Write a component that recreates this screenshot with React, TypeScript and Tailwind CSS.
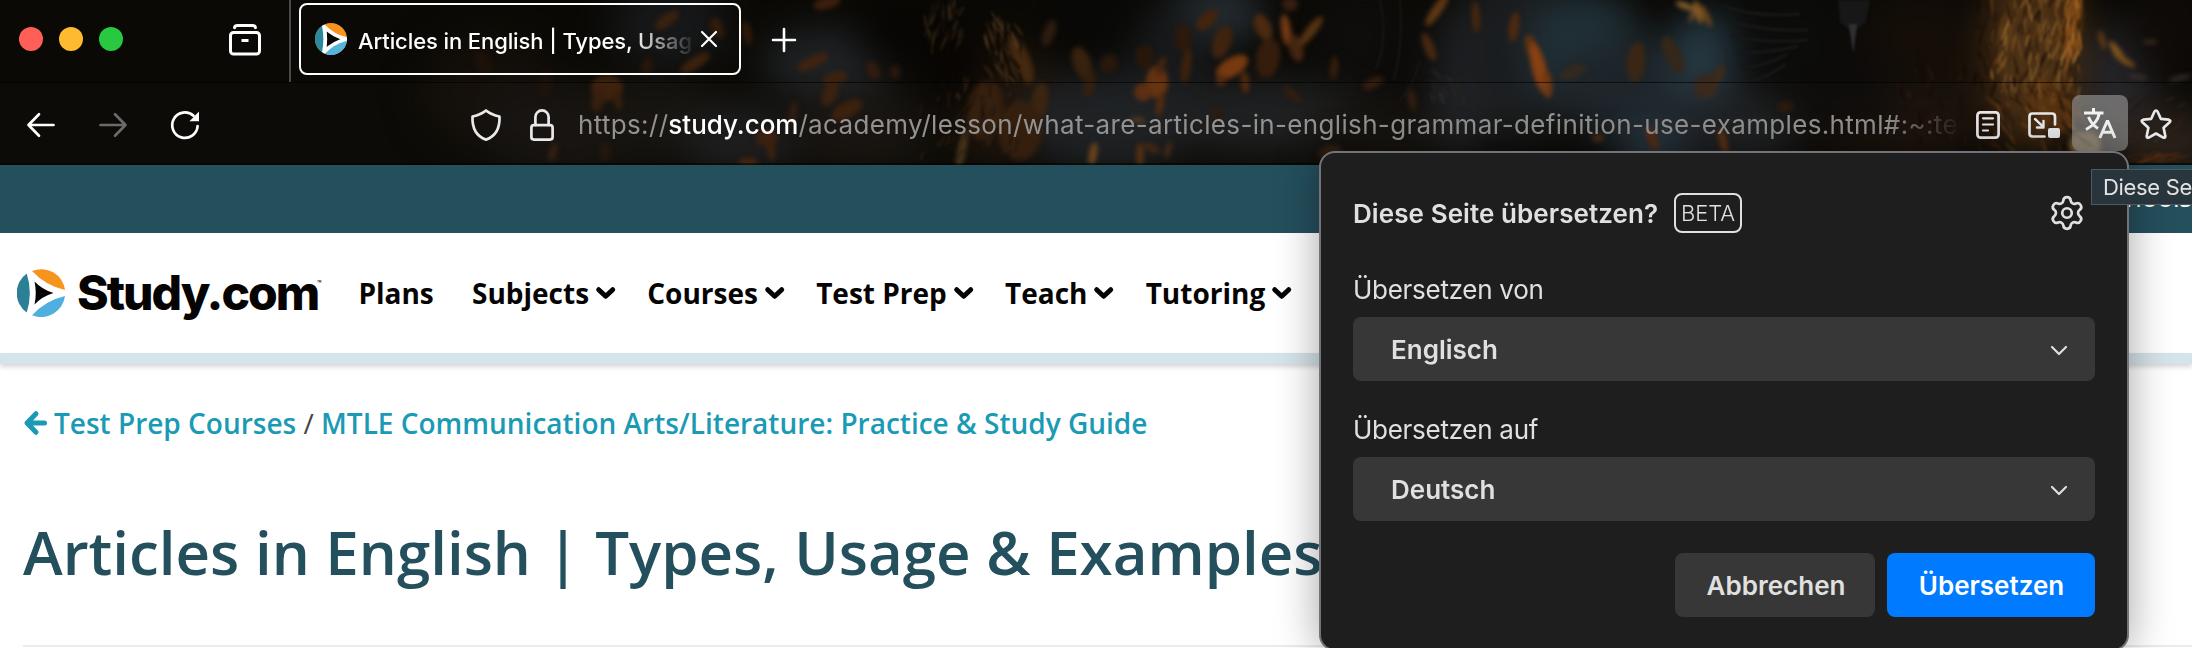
import type { ReactNode } from "react";
import { Settings } from "lucide-react";

/* ---------- toolbar theme artwork ---------- */

type Blob = [number, number, number, number, number, string, number?];

const glows: Blob[] = [
  [490, 90, 70, 60, 0, "#130e08"],
  [560, 130, 80, 50, 0, "#151210"],
  [670, 25, 60, 40, 0, "#17181a"],
  [640, 120, 90, 40, 0, "#16130f"],
  [740, 140, 60, 35, 0, "#1c1c1d"],
  [830, 62, 70, 34, 0, "#1f2225"],
  [860, 130, 70, 40, 0, "#17130f"],
  [1000, 100, 60, 60, 0, "#1d130a"],
  [1110, 120, 90, 50, 0, "#1d2023"],
  [1215, 14, 50, 30, 0, "#252d33"],
  [1170, 50, 40, 40, 0, "#17191b"],
  [1260, 115, 110, 38, 0, "#1d1e1f"],
  [1400, 130, 90, 30, 0, "#16130f"],
  [1460, 80, 26, 80, 0, "#202226"],
  [1520, 50, 60, 90, 0, "#1a1c1e"],
  [1585, 50, 60, 60, 0, "#203037"],
  [1640, 90, 90, 50, 0, "#1d2429"],
  [1705, 55, 38, 44, 0, "#263842"],
  [1655, 150, 40, 26, 0, "#263440"],
  [1740, 130, 60, 40, 0, "#1d1f21"],
  [1920, 80, 70, 90, 0, "#150e08"],
  [1900, 130, 90, 30, 0, "#1c120b"],
  [2034, 50, 48, 100, 0, "#4a2f14"],
  [2120, 80, 34, 60, 0, "#25252a"],
  [2160, 140, 60, 30, 0, "#2a211a"],
  [2165, 30, 40, 50, 0, "#0f0b08"],
];

const shadows: Blob[] = [
  [1090, 20, 40, 30, 0, "#080807"],
  [960, 70, 26, 50, 10, "#080503"],
  [1370, 40, 44, 50, 0, "#0e0d0c"],
  [1410, 70, 26, 44, 0, "#0c0a09"],
  [1330, 30, 20, 40, 0, "#0e0d0c"],
  [1790, 40, 60, 54, 0, "#0c0c0b"],
  [1850, 90, 50, 40, 0, "#0d0b0a"],
  [900, 30, 44, 40, 0, "#080604"],
];

const leaves: Blob[] = [
  [607, 88, 16, 13, 0, "#3b200c"],
  [598, 100, 6, 12, 12, "#361d0b"],
  [618, 100, 4, 10, -8, "#361d0b"],
  [695, 63, 17, 6, -32, "#3b210d"],
  [667, 20, 14, 6, -35, "#3a210e"],
  [717, 28, 6, 11, -20, "#321c0b"],
  [747, 33, 5, 12, -10, "#2d180a"],
  [647, 66, 6, 9, 15, "#27160a"],
  [483, 63, 8, 13, -20, "#1c120a"],
  [545, 85, 7, 14, 10, "#1a110a"],
  [813, 62, 17, 6, -25, "#3f2310"],
  [835, 78, 13, 6, -15, "#3d220f"],
  [830, 94, 7, 13, 25, "#3a200d"],
  [847, 110, 17, 8, -28, "#3a1f0c"],
  [873, 70, 6, 10, -25, "#321c0e"],
  [793, 113, 4, 12, 8, "#2e1c0f"],
  [767, 138, 11, 9, 0, "#3a1f0c"],
  [771, 151, 4, 10, -8, "#3a1f0c"],
  [748, 163, 10, 5, 0, "#43230c"],
  [553, 152, 4, 10, 15, "#321d0f"],
  [605, 152, 6, 9, 0, "#21150c"],
  [827, 3, 14, 6, -15, "#3c1f0c"],
  [895, 72, 5, 7, 0, "#2a180d"],
  [1049, 33, 6, 14, 20, "#2c1c0f"],
  [1082, 63, 9, 17, -20, "#38210e"],
  [1089, 84, 6, 14, 10, "#321e0e"],
  [1109, 64, 9, 10, 30, "#28180c"],
  [1145, 57, 10, 12, 0, "#27170b"],
  [1157, 82, 11, 16, 0, "#66320f"],
  [1143, 92, 9, 9, 30, "#5b2e0f"],
  [1160, 104, 4, 12, 10, "#50290e"],
  [1161, 66, 4, 10, 20, "#44240e"],
  [1186, 66, 5, 18, 8, "#3d210d"],
  [1183, 38, 9, 14, 0, "#2b190c"],
  [1207, 20, 13, 7, -42, "#45240e"],
  [1222, 42, 9, 17, 20, "#40230f"],
  [1232, 67, 18, 9, -32, "#773a10"],
  [1245, 82, 4, 11, -5, "#532a0e"],
  [1221, 80, 5, 6, 0, "#532a0e"],
  [1263, 27, 8, 14, -25, "#4b2a10"],
  [1268, 58, 12, 20, 10, "#351d0d"],
  [1286, 30, 5, 16, -8, "#723814"],
  [1296, 48, 7, 14, -15, "#442510"],
  [1311, 31, 5, 18, 38, "#563313"],
  [1290, 4, 8, 7, 0, "#351e0f"],
  [1334, 68, 4, 12, 5, "#351e0d"],
  [1373, 83, 11, 5, -25, "#351d0e"],
  [1292, 94, 12, 4, 40, "#321b0d"],
  [1437, 10, 5, 19, 35, "#5f3714"],
  [1429, 47, 5, 15, -22, "#482810"],
  [1412, 100, 4, 12, -10, "#2f1c0f"],
  [1476, 17, 4, 16, -3, "#47260f"],
  [1514, 27, 5, 15, 8, "#4f290f"],
  [1533, 50, 6, 16, -20, "#65330f"],
  [1539, 68, 7, 26, -14, "#884012"],
  [1547, 84, 5, 14, -5, "#713710"],
  [1330, 152, 12, 7, -15, "#2e1c0e"],
  [1093, 154, 4, 12, 10, "#6b431a"],
  [1140, 155, 4, 12, 0, "#532d0f"],
  [1152, 148, 9, 4, 25, "#402410"],
  [1168, 150, 3, 9, 15, "#402813"],
  [1138, 120, 8, 3, 10, "#4f3620"],
  [1217, 115, 5, 10, 0, "#29190f"],
  [1040, 100, 8, 18, 8, "#3a230e"],
  [1021, 60, 9, 26, -22, "#44280f"],
  [1020, 130, 22, 30, 0, "#321d0c"],
  [985, 110, 18, 30, 10, "#331d0c"],
  [962, 150, 4, 20, 12, "#4a361e"],
  [1573, 72, 14, 6, -25, "#35291e"],
  [1636, 62, 9, 20, 5, "#3b2615"],
  [1673, 55, 8, 20, -25, "#352719"],
  [1706, 86, 12, 12, 0, "#38281b"],
  [1719, 74, 5, 10, 20, "#3f2a1a"],
  [1598, 138, 6, 4, 0, "#482b16"],
  [1652, 138, 5, 13, -20, "#532a11"],
  [1723, 141, 4, 13, -15, "#5b2e11"],
  [1785, 107, 9, 5, -10, "#2b180c"],
  [1595, 158, 8, 3, -10, "#47250f"],
  [1685, 6, 10, 3, 20, "#8a642b"],
  [1698, 12, 3.5, 12, -15, "#855a22"],
  [1706, 16, 3, 12, -25, "#6f4719"],
  [1692, 16, 2, 7, 20, "#6f4f2a"],
  [2030, 50, 34, 44, 0, "#4c3116"],
  [2072, 24, 9, 36, 5, "#774415"],
  [2050, 105, 20, 30, -35, "#53300f"],
  [2085, 145, 16, 14, 0, "#70572f"],
  [2118, 53, 3.5, 14, -35, "#8a5a20"],
  [2124, 60, 3, 13, -58, "#774d1b"],
  [2102, 40, 3, 10, -15, "#5d3a16"],
  [2150, 42, 8, 2, 0, "#3c2c1f"],
  [2138, 77, 10, 2, 10, "#3c3430"],
  [2180, 78, 12, 2, -12, "#3c3430"],
];

/* Small repeatable generator, so the bark keeps the same grain on every render. */
function grain(count: number, seed: number, x: number, y: number, w: number, h: number, tilt: number, colors: string[]): Blob[] {
  let s = seed * 7919;
  const next = () => {
    s = (s * 16807) % 2147483647;
    return s / 2147483647;
  };
  next();
  return Array.from({ length: count }, () => [
    x + next() * w,
    y + next() * h,
    0.7 + next() * 1.3,
    3 + next() * 9,
    tilt + (next() - 0.5) * 44,
    colors[Math.floor(next() * colors.length)],
    0.2 + next() * 0.5,
  ] as Blob);
}

const bark: Blob[] = [
  ...grain(230, 71, 1992, -5, 88, 100, 8, ["#80531f", "#6a4119", "#8f642a", "#1c1008", "#1c1008", "#4a2c10", "#2a190b"]),
  ...grain(36, 5, 2062, -8, 20, 70, 8, ["#a05c1c", "#8f501a", "#ab7732"]),
  ...grain(110, 33, 1985, 85, 100, 66, -35, ["#5b3512", "#6f4519", "#1b0f07", "#27150a", "#3d230d"]),
  ...grain(40, 53, 1975, 0, 22, 150, 5, ["#120b06", "#2b190b", "#1c1008"]),
  ...grain(90, 91, 985, 20, 36, 62, -20, ["#5c4427", "#46301a", "#33210f", "#120b06", "#0d0804"]),
  ...grain(50, 19, 925, 0, 40, 50, 10, ["#3a2a18", "#24170c", "#4a361f", "#0d0804"]),
  ...grain(70, 47, 920, 80, 100, 84, 18, ["#2d1c0e", "#150d07", "#38230f"]),
  ...grain(24, 29, 1432, 70, 34, 34, -30, ["#302d2b", "#242120"]),
  ...grain(50, 61, 1890, 50, 100, 100, 0, ["#20130b", "#0e0805", "#28170b"]),
  ...grain(44, 83, 2110, 96, 80, 60, 55, ["#332d29", "#1d1712", "#2a1a10"]),
  ...grain(24, 13, 2130, 154, 60, 8, 80, ["#5b2f12", "#3a1f0e"]),
];

function Ellipses({ items }: { items: Blob[] }) {
  return (
    <>
      {items.map(([x, y, rx, ry, rot, fill, opacity], i) => (
        <ellipse key={i} cx={x} cy={y} rx={rx} ry={ry} fill={fill} opacity={opacity} transform={`rotate(${rot} ${x} ${y})`} />
      ))}
    </>
  );
}

function ThemeArtwork() {
  return (
    <svg className="absolute inset-0" width="2192" height="165" viewBox="0 0 2192 165" aria-hidden="true">
      <defs>
        <filter id="far" x="-20%" y="-60%" width="140%" height="220%" colorInterpolationFilters="sRGB">
          <feGaussianBlur stdDeviation="18" />
        </filter>
        <filter id="near" x="-5%" y="-20%" width="110%" height="140%" colorInterpolationFilters="sRGB">
          <feGaussianBlur stdDeviation="2.6" />
        </filter>
        <filter id="fine" x="-5%" y="-20%" width="110%" height="140%" colorInterpolationFilters="sRGB">
          <feGaussianBlur stdDeviation="0.8" />
        </filter>
      </defs>
      <rect width="2192" height="165" fill="#0a0905" />
      <g filter="url(#far)">
        <Ellipses items={glows} />
        <Ellipses items={shadows} />
      </g>
      <g filter="url(#near)">
        <Ellipses items={leaves} />
      </g>
      <g filter="url(#fine)">
        <Ellipses items={bark} />
        <path d="M1838 0h32l-4 22-9 8-3 24-5-24-9-8z" fill="#171718" />
        <path d="M1849 24l4 28 4-28z" fill="#303033" />
        <g fill="none" stroke="#171717" strokeWidth="3">
          <path d="M1722 6q34 12 78 8M1728 20q34 12 80 10M1732 36q34 8 76 4M1738 52q30 2 60-6M1742 68q24-2 46-14M1750 82q20-6 36-18" />
        </g>
        <g fill="none" stroke="#191510" strokeWidth="2">
          <path d="M1380 0q8 40-4 70M1400 0q4 40-6 80M1420 60q-8 30-20 40" />
        </g>
      </g>
    </svg>
  );
}

/* ---------- icons ---------- */

function Ico({ w, h, className = "", sw = 2.7, children }: { w: number; h: number; className?: string; sw?: number; children: ReactNode }) {
  return (
    <svg
      className={`shrink-0 overflow-visible ${className}`}
      width={w}
      height={h}
      viewBox={`0 0 ${w} ${h}`}
      fill="none"
      stroke="currentColor"
      strokeWidth={sw}
      strokeLinecap="round"
      strokeLinejoin="round"
    >
      {children}
    </svg>
  );
}

const RecentIcon = () => (
  <Ico w={32} h={32} sw={3} className="text-white">
    <path d="M5.5 3.6Q6 1.5 8.5 1.5h15q2.500 0 3 2.100" />
    <rect x="1.500" y="8.500" width="29" height="21.500" rx="3" />
    <path d="M12.500 16.500h7" strokeLinecap="butt" />
  </Ico>
);

const Favicon = () => (
  <svg className="shrink-0" width="32" height="32" viewBox="0 0 32 32">
    <clipPath id="fav">
      <circle cx="16" cy="16" r="16" />
    </clipPath>
    <g clipPath="url(#fav)">
      <rect width="32" height="32" fill="#f7941d" />
      <rect width="9" height="32" fill="#2c889c" />
      <path d="M9 16h23v16H8z" fill="#55b4dc" />
      <path d="M9 3.500Q18 13 31.500 16Q18 19.500 9 29Q11.500 16 9 3.500z" fill="#0b0a08" stroke="#fff" strokeWidth="3.800" strokeLinejoin="round" />
    </g>
  </svg>
);

const StudyMark = () => (
  <svg className="shrink-0" width="48" height="48" viewBox="0 0 48 48">
    <path d="M9.700 4.500A24 24 0 0 0 9.700 43.500Q16 24 9.700 4.500z" fill="#2b8096" />
    <path d="M15 2A24 24 0 0 1 48 21Q28.500 16.500 15 2z" fill="#f7941d" />
    <path d="M15 46.300A24 24 0 0 0 48 27Q28.500 31.500 15 46.300z" fill="#4fb0e0" />
    <path d="M17.500 12.500Q25 20.500 36.500 24Q25 27.500 17.500 35.500Q20 24 17.500 12.500z" fill="#050403" />
  </svg>
);

const NavChevron = () => (
  <Ico w={19.5} h={12} sw={5} className="ml-[7px] -mt-px text-[#050403]">
    <path d="M2.700 2.700l7 6.600 7-6.600" />
  </Ico>
);

const SelectChevron = () => (
  <Ico w={16} h={9} sw={2.2} className="mt-[2px] text-[#dedede]">
    <path d="M1 1l7 7 7-7" />
  </Ico>
);

/* ---------- browser chrome ---------- */

function TabBar() {
  return (
    <div className="relative flex h-[83px] items-start border-b border-black/60">
      <div className="mt-[27px] ml-[19px] flex gap-4">
        <span className="size-6 rounded-full bg-[#ff5f57]" />
        <span className="size-6 rounded-full bg-[#febb32]" />
        <span className="size-6 rounded-full bg-[#28c840]" />
      </div>
      <div className="mt-6 ml-[106px]">
        <RecentIcon />
      </div>
      <div className="ml-7 h-[82px] w-[2px] bg-[#4b4a48]" />
      <div className="mt-[3px] ml-2 flex h-[72px] w-[442px] items-center rounded-lg border-2 border-white pl-[14px]">
        <Favicon />
        <div className="ml-[11px] w-[339px] overflow-hidden pt-1 text-[22px] leading-8 font-medium tracking-[-0.1px] whitespace-nowrap text-white [mask-image:linear-gradient(to_right,black_275px,transparent_339px)]">
          Articles in English | Types, Usag
        </div>
        <Ico w={16} h={16} sw={2.2} className="ml-[4px] text-white">
          <path d="M1 1l14 14M15 1L1 15" />
        </Ico>
      </div>
      <Ico w={24} h={24} sw={2.6} className="mt-7 ml-[31px] text-white">
        <path d="M1 12h22M12 1v22" />
      </Ico>
    </div>
  );
}

function AddressBar() {
  return (
    <div className="relative flex h-[82px] items-center border-b-2 border-black/50 bg-white/[0.012] pt-[3px] text-[#e9e9ea]">
      <Ico w={28} h={24} className="ml-[27px] text-white">
        <path d="M26.500 12H1.500M12 1.300L1.500 12 12 22.700" />
      </Ico>
      <Ico w={28} h={24} className="ml-11 text-[#6c6b6a]">
        <path d="M1.500 12h25M16 1.300L26.500 12 16 22.700" />
      </Ico>
      <Ico w={28} h={28} className="ml-11 text-white">
        <path d="M26.600 15A12.700 12.700 0 1 1 22.500 4.800" />
        <path d="M28 0.500v9.700h-9.500z" fill="currentColor" stroke="none" />
      </Ico>
      <Ico w={30} h={32} className="ml-[272px]">
        <path d="M15 1.500C12 4 6 6.500 1.500 7.500C1 20 6 27.500 15 30.600C24 27.500 29 20 28.500 7.500C24 6.500 18 4 15 1.500z" />
      </Ico>
      <Ico w={24} h={32} className="ml-[29px]">
        <rect x="1.400" y="16.200" width="21.200" height="14.400" rx="2.500" />
        <path d="M5.400 16V8a6.600 6.600 0 0 1 13.200 0v8" />
      </Ico>
      <div className="ml-[24px] w-[1382px] overflow-hidden text-[26px] leading-10 tracking-[0.34px] whitespace-nowrap text-[#939291] [mask-image:linear-gradient(to_right,black_1310px,transparent_1384px)]">
        https://<span className="font-medium tracking-[-0.03px] text-white">study.com</span>
        /academy/lesson/what-are-articles-in-english-grammar-definition-use-examples.html#:~:te
      </div>
      <Ico w={24} h={28} className="ml-[16px]">
        <rect x="1.400" y="1.400" width="21.200" height="25.200" rx="3" />
        <path d="M7 7.300h10M7 13.500h10M7 19.500h5" strokeWidth="2.200" />
      </Ico>
      <Ico w={32} h={26} className="ml-7">
        <path d="M27 12.500V4.500q0-3-3-3H4.500q-3 0-3 3v17q0 3 3 3h12" />
        <rect x="20" y="16" width="12" height="10" rx="2" fill="currentColor" stroke="none" />
        <path d="M7 7l7.500 7M15.500 9v6.500H9" strokeWidth="2.400" />
      </Ico>
      <div className="-mt-[3px] ml-3 flex h-14 w-14 items-center justify-center rounded-lg bg-[#aaaaaa]/55">
        <Ico w={32} h={30} sw={3} className="text-[#f4f4f4]">
          <g strokeLinecap="butt">
            <path d="M9.500 0v5M0 5h19.500M15.500 5C14 12 9 18 2 21.500M4.500 9C6.500 14 10 18 14 20.500" />
            <path d="M15.800 30L23.500 12.500 31 30M18 24.300h11" strokeLinejoin="bevel" />
          </g>
        </Ico>
      </div>
      <Ico w={32} h={31} className="ml-3">
        <path d="M16 1.500q1 0 1.500 1l3.300 7.300 8 .9q2.500.5.800 2.500l-6 5.600 1.700 8.200q.2 2.300-2 1.600L16 24.500l-7.300 4.100q-2.200.7-2-1.600l1.700-8.200-6-5.600q-1.700-2 .8-2.500l8-.9 3.300-7.300q.5-1 1.500-1z" />
      </Ico>
    </div>
  );
}

/* ---------- web page ---------- */

function NavItem({ label }: { label: string }) {
  return (
    <a className="flex items-center">
      {label}
      <NavChevron />
    </a>
  );
}

function SitePage() {
  return (
    <main className="font-['Open_Sans',sans-serif]">
      <div className="flex h-[68px] items-center justify-end bg-[#244f5d] pb-1 text-[26px] text-white">Schools</div>
      <nav className="flex h-[120px] items-center text-[28px] font-bold text-[#050403]">
        <div className="ml-[17px] flex items-center">
          <StudyMark />
          <span className="ml-3 w-[240px] font-['Inter',sans-serif] text-[48px] leading-[60px] font-extrabold tracking-[-2px] whitespace-nowrap">
            Study.com
          </span>
          <span className="-mt-[20px] font-['Inter',sans-serif] text-[7px] leading-none font-semibold">™</span>
        </div>
        <div className="ml-[37px] flex items-center gap-[31.7px]">
          <a className="mr-[6.5px]">Plans</a>
          <NavItem label="Subjects" />
          <NavItem label="Courses" />
          <NavItem label="Test Prep" />
          <NavItem label="Teach" />
          <NavItem label="Tutoring" />
        </div>
      </nav>
      <div className="h-[11px] bg-[#d5e3ea] shadow-[0_3px_5px_rgba(0,0,0,0.16)]" />
      <div className="mt-[39px] ml-6 flex h-10 items-center text-[28px] font-semibold whitespace-nowrap text-[#1a9ab5]">
        <Ico w={23} h={24} sw={5} className="mr-[7px]">
          <path d="M12 2.700L3 12l9 9.300M4 12h16.500" />
        </Ico>
        <span>
          Test Prep Courses <span className="font-normal text-[#444]">/</span> MTLE Communication Arts/Literature: Practice &amp; Study Guide
        </span>
      </div>
      <h1 className="mt-[69px] ml-[23px] h-20 text-[60px] leading-20 font-semibold whitespace-nowrap text-[#244f5d]">
        Articles in English | Types, Usage &amp; Examples
      </h1>
      <hr className="mt-[53px] ml-[23px] border-0 border-t-2 border-[#ececec]" />
    </main>
  );
}

/* ---------- translation panel ---------- */

function LanguageField({ label, value, className }: { label: string; value: string; className: string }) {
  return (
    <div className={className}>
      <div className="h-9 pt-px leading-9 tracking-[-0.28px]">{label}</div>
      <div className="mt-[10px] flex h-16 items-center justify-between rounded-lg bg-[#373737] pr-7 pl-[38px] font-semibold">
        {value}
        <SelectChevron />
      </div>
    </div>
  );
}

function TranslatePanel() {
  return (
    <section className="absolute top-[151px] left-[1319px] w-[810px] rounded-2xl border-2 border-[#747377] bg-[#1e1e1e] px-8 pt-10 pb-8 text-[26px] text-[#e0e0e0] shadow-[0_2px_44px_rgba(0,0,0,0.36)]">
      <header className="flex h-10 items-center">
        <h2 className="w-[321px] font-semibold tracking-[0.08px] whitespace-nowrap">Diese Seite übersetzen?</h2>
        <span className="flex h-10 w-[68px] items-center justify-center rounded-lg border-2 border-[#e0e0e0] text-[22px] font-light tracking-[-0.1px]">
          BETA
        </span>
        <Settings className="mr-[9px] ml-auto" size={38} strokeWidth={1.7} />
      </header>
      <LanguageField className="mt-[38px]" label="Übersetzen von" value="Englisch" />
      <LanguageField className="mt-[30px]" label="Übersetzen auf" value="Deutsch" />
      <footer className="mt-8 flex justify-end gap-3 font-semibold">
        <button className="h-16 w-[200px] rounded-lg bg-[#373737] pl-[2px]">Abbrechen</button>
        <button className="h-16 w-[208px] rounded-lg bg-[#007aff] pl-px text-white">Übersetzen</button>
      </footer>
    </section>
  );
}

export default function App() {
  return (
    <div className="relative h-[648px] w-[2192px] overflow-hidden bg-white font-['Inter',sans-serif]">
      <header className="relative h-[165px]">
        <ThemeArtwork />
        <TabBar />
        <AddressBar />
      </header>
      <SitePage />
      <TranslatePanel />
      <div className="absolute top-[169px] left-[2091px] h-9 w-[220px] border border-[#50595f] bg-[#28353c] pl-[11px] text-[22px] leading-[35px] tracking-[-0.33px] whitespace-nowrap text-[#e2e2e2]">
        Diese Seite übersetzen
      </div>
    </div>
  );
}
